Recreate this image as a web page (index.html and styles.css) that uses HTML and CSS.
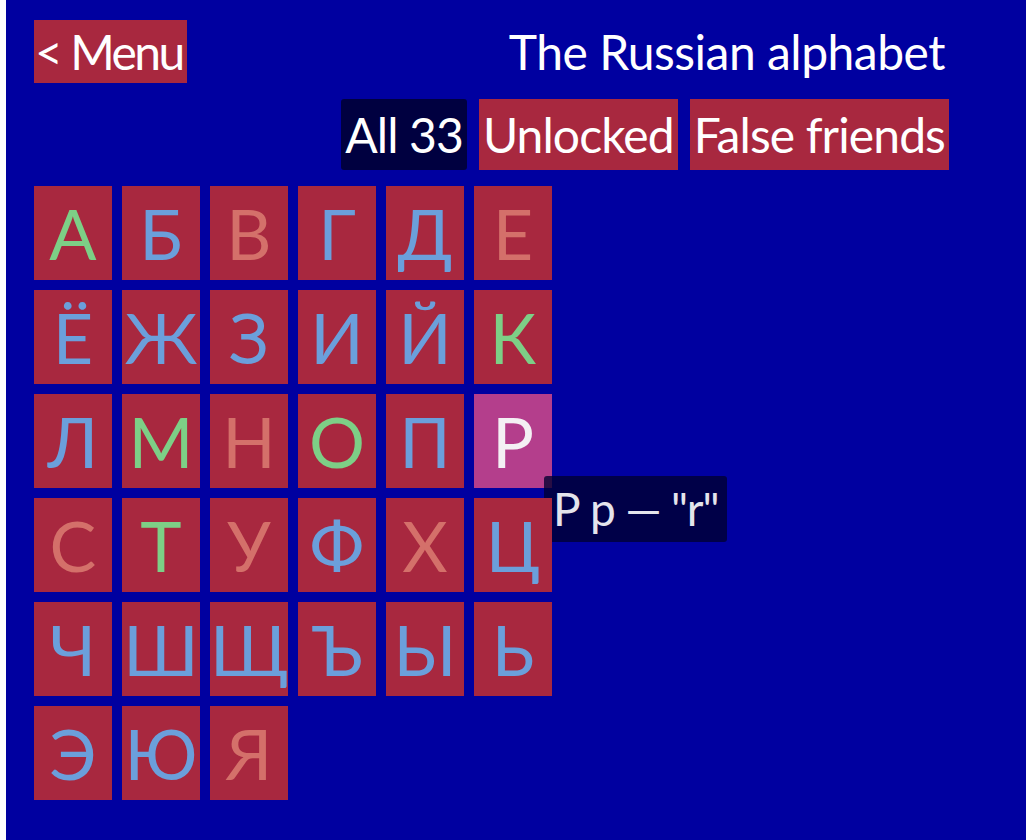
FILE: index.html
```html
<!DOCTYPE html>
<html lang="en">
<head>
<meta charset="utf-8">
<title>The Russian alphabet</title>
<link rel="stylesheet" href="styles.css">
</head>
<body>
<div class="screen">
  <div class="app">
    <header class="top">
      <button class="menu-btn">&lt; Menu</button>
      <h1 class="title">The Russian alphabet</h1>
    </header>
    <nav class="tabs">
      <button class="tab tab-active">All 33</button>
      <button class="tab">Unlocked</button>
      <button class="tab">False friends</button>
    </nav>
    <div class="grid">
      <div class="tile same">А</div>
      <div class="tile other">Б</div>
      <div class="tile false">В</div>
      <div class="tile other">Г</div>
      <div class="tile other">Д</div>
      <div class="tile false">Е</div>
      <div class="tile other">Ё</div>
      <div class="tile other">Ж</div>
      <div class="tile other">З</div>
      <div class="tile other">И</div>
      <div class="tile other">Й</div>
      <div class="tile same">К</div>
      <div class="tile other">Л</div>
      <div class="tile same">М</div>
      <div class="tile false">Н</div>
      <div class="tile same">О</div>
      <div class="tile other">П</div>
      <div class="tile false hover">Р<span class="tooltip">Р р — "r"</span></div>
      <div class="tile false">С</div>
      <div class="tile same">Т</div>
      <div class="tile false">У</div>
      <div class="tile other">Ф</div>
      <div class="tile false">Х</div>
      <div class="tile other">Ц</div>
      <div class="tile other">Ч</div>
      <div class="tile other">Ш</div>
      <div class="tile other">Щ</div>
      <div class="tile other">Ъ</div>
      <div class="tile other">Ы</div>
      <div class="tile other">Ь</div>
      <div class="tile other">Э</div>
      <div class="tile other">Ю</div>
      <div class="tile false">Я</div>
    </div>
  </div>
</div>
</body>
</html>
```
FILE: styles.css
```css
html, body {
  margin: 0;
  padding: 0;
  background: #ffffff;
}
body {
  font-family: Lato, "Noto Sans", sans-serif;
  color: #ffffff;
}
.screen {
  margin-left: 6px;
  min-height: 840px;
  background: #0000a0;
}
.app {
  width: 915px;
  padding: 20px 0 0 28px;
}
.top {
  display: flex;
  justify-content: space-between;
  align-items: flex-start;
  height: 63px;
}
.menu-btn {
  font-family: inherit;
  font-size: 48px;
  letter-spacing: -2.5px;
  line-height: 63px;
  height: 63px;
  padding: 0 4px 0 1px;
  border: 0;
  margin: 0;
  background: #a8283f;
  color: #ffffff;
}
.title {
  margin: 0 4px 0 0;
  font-size: 48px;
  letter-spacing: -0.5px;
  font-weight: normal;
  line-height: 63px;
}
.tabs {
  display: flex;
  justify-content: flex-end;
  gap: 12px;
  margin-top: 16px;
}
.tab {
  font-family: inherit;
  font-size: 48px;
  letter-spacing: -0.9px;
  height: 71px;
  line-height: 71px;
  padding: 0 4px;
  margin: 0;
  border: 0;
  background: #a8283f;
  color: #ffffff;
}
.tab-active {
  background: #000040;
  border-radius: 3px;
}
.grid {
  display: grid;
  grid-template-columns: repeat(6, 78px);
  grid-auto-rows: 94px;
  gap: 10px;
  margin-top: 16px;
}
.tile {
  position: relative;
  background: #a8283f;
  font-size: 70px;
  line-height: 94px;
  text-align: center;
}
.same { color: #7dcf86; }
.other { color: #6b9fdb; }
.false { color: #d4706a; }
.tile.hover {
  background: #b43e8c;
  color: #f4f0f4;
}
.tooltip {
  position: absolute;
  left: 70px;
  top: 82px;
  height: 66px;
  line-height: 66px;
  padding: 0 9px;
  white-space: nowrap;
  font-size: 46px;
  letter-spacing: -1.2px;
  color: #e4e4ec;
  background: rgba(0, 0, 48, 0.78);
  border-radius: 3px;
  text-align: left;
}
```
